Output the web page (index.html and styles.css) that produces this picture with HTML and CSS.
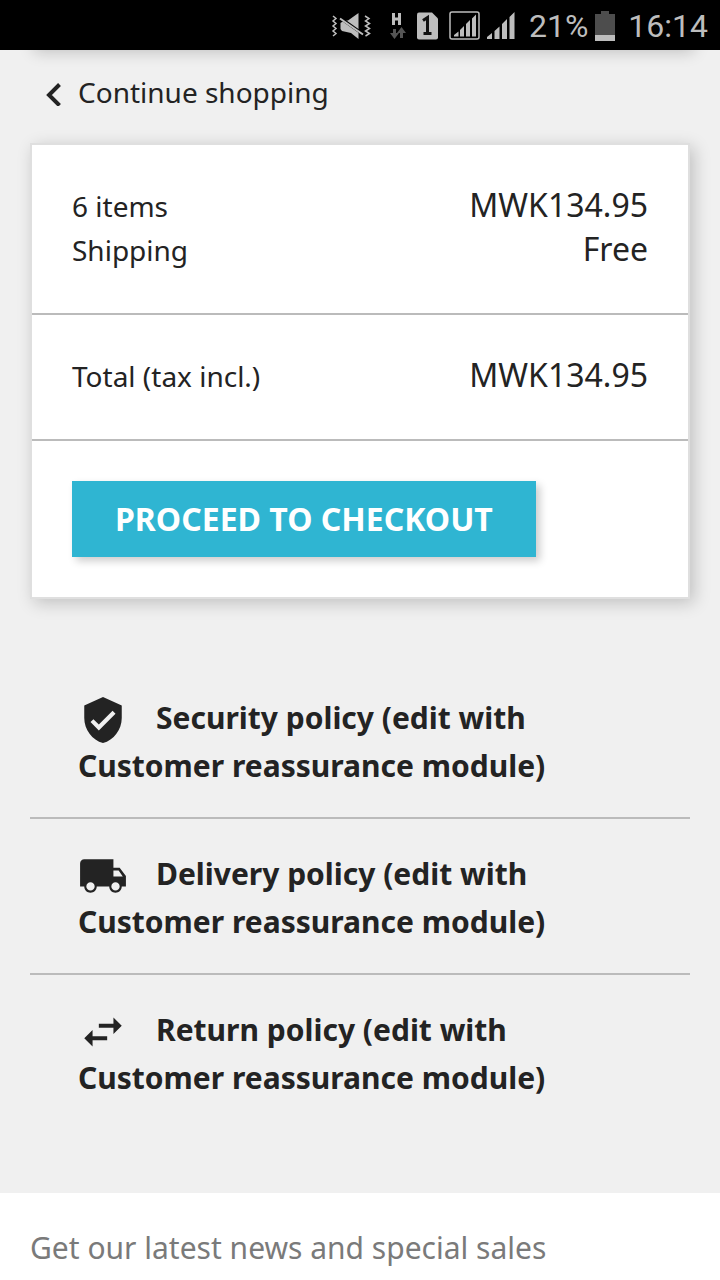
FILE: index.html
```html
<!DOCTYPE html>
<html lang="en">
<head>
<meta charset="utf-8">
<meta name="viewport" content="width=device-width, initial-scale=1">
<title>Shopping cart</title>
<link rel="stylesheet" href="styles.css">
</head>
<body>
<header class="status">
  <svg class="status-mute" width="40" height="28" viewBox="0 0 40 28" aria-hidden="true">
    <path d="M17 8.500L27.500 1v26L20 21l-9-2-1.500-2v-6l3-2z" fill="#bdbdbd"/>
    <path d="M10 6.500l24 17" stroke="#000" stroke-width="3"/>
    <path d="M9 6.500l23 16" stroke="#bdbdbd" stroke-width="2"/>
    <path d="M2 4l3 2.500L2 9l3 2.500L2 14l3 2.500L2 19l3 2.500L2 24M34 4l4 2.500L34.500 9l4 2.500-4 2.500 4 2.500-4 2.500 4 2.500-4 2.500" fill="none" stroke="#bdbdbd" stroke-width="1.500"/>
  </svg>
  <svg class="status-data" width="18" height="28" viewBox="0 0 18 28" aria-hidden="true">
    <path d="M4.500 1v12M10.500 1v12M4.500 7h6" fill="none" stroke="#bdbdbd" stroke-width="3"/>
    <path d="M4 17v4H1l4.500 6 4.500-6H7v-4zM11 26v-5H8l4.500-6 4.500 6h-3v5z" fill="#555"/>
  </svg>
  <svg class="status-sim" width="22" height="28" viewBox="0 0 22 28" aria-hidden="true">
    <path d="M2 .5h13l6 6V25.500q0 2-2 2H2q-2 0-2-2v-23q0-2 2-2z" fill="#bdbdbd"/>
    <path d="M6 8.500l4.500-3v16.500M6.500 21.500h8" fill="none" stroke="#111" stroke-width="3"/>
  </svg>
  <svg class="status-roaming" width="32" height="30" viewBox="0 0 32 30" aria-hidden="true">
    <rect x="1" y="1" width="29" height="27" rx="2" fill="none" stroke="#bdbdbd" stroke-width="1.500"/>
    <path d="M5 25.500v-1.500l4.500-3.500v5zM11 25.500v-6.500l4-4v10.500zM17 25.500V13l4-4v16.500zM23 25.500V7.500l4-4v22z" fill="#bdbdbd"/>
  </svg>
  <svg class="status-signal" width="28" height="28" viewBox="0 0 28 28" aria-hidden="true">
    <path d="M0 27v-2l5-4v6zM7.500 27v-8l5-4.500V27zM15 27V12l5-5v20zM22.500 27V5l5-5v27z" fill="#bdbdbd"/>
  </svg>
  <span class="status-percent">21%</span>
  <svg class="status-battery" width="20" height="30" viewBox="0 0 20 30" aria-hidden="true">
    <path d="M0 3h6V0h8v3h6v27H0z" fill="#4d4d4d"/>
    <path d="M0 24h20v6H0z" fill="#bdbdbd"/>
  </svg>
  <time class="status-time">16:14</time>
</header>

<main class="cart">
  <div class="card-edge"></div>
  <a class="back" href="#">
    <svg width="16" height="24" viewBox="0 0 16 24" aria-hidden="true"><path d="M13.500 2.500L3 13l10.500 10.500" fill="none" stroke="#232323" stroke-width="4"/></svg>
    <span class="back-label">Continue shopping</span>
  </a>

  <section class="card">
    <div class="card-block">
      <div class="row"><span>6 items</span><span class="price">MWK134.95</span></div>
      <div class="row"><span>Shipping</span><span class="price">Free</span></div>
    </div>
    <div class="card-block">
      <div class="row"><span>Total (tax incl.)</span><span class="price">MWK134.95</span></div>
    </div>
    <div class="card-block">
      <button class="checkout" type="button">PROCEED TO CHECKOUT</button>
    </div>
  </section>

  <ul class="policies">
    <li class="policy">
      <svg class="policy-icon" viewBox="0 0 24 24" aria-hidden="true"><path d="M12 1L3 5v6c0 5.550 3.840 10.740 9 12 5.160-1.260 9-6.450 9-12V5l-9-4zm-2 16l-4-4 1.410-1.410L10 14.170l6.590-6.590L18 9l-8 8z"/></svg>Security policy (edit with Customer reassurance module)
    </li>
    <li class="policy">
      <svg class="policy-icon" viewBox="0 0 24 24" aria-hidden="true"><path d="M20 8h-3V4H3c-1.100 0-2 .9-2 2v11h2c0 1.660 1.340 3 3 3s3-1.340 3-3h6c0 1.660 1.340 3 3 3s3-1.340 3-3h2v-5l-3-4zM6 19a2 2 0 0 1 0-4 2 2 0 0 1 0 4zm13.500-9.700l2 2.900H17V9.300h2.500zM18 19a2 2 0 0 1 0-4 2 2 0 0 1 0 4z"/></svg>Delivery policy (edit with Customer reassurance module)
    </li>
    <li class="policy">
      <svg class="policy-icon" viewBox="0 0 24 24" aria-hidden="true"><path d="M6.990 11L3 15l3.990 4v-3H14v-2H6.990v-3zM21 9l-3.990-4v3H10v2h7.010v3L21 9z"/></svg>Return policy (edit with Customer reassurance module)
    </li>
  </ul>
</main>

<footer class="newsletter">
  <p class="newsletter-text">Get our latest news and special sales</p>
</footer>
</body>
</html>
```

FILE: styles.css
```css
* {
  box-sizing: border-box;
}

body {
  margin: 0;
  background: #fff;
  color: #232323;
  font-family: "Noto Sans", sans-serif;
  font-size: 28px;
}

.status {
  position: relative;
  z-index: 1;
  display: flex;
  align-items: center;
  justify-content: flex-end;
  height: 50px;
  padding: 2px 12px 0 0;
  background: #000;
  color: #bdbdbd;
  font-family: Roboto, sans-serif;
  font-size: 32px;
  line-height: 48px;
}

.status-mute {
  margin-right: 18px;
}

.status-data,
.status-sim {
  margin-right: 10px;
}

.status-roaming {
  margin-right: 6px;
}

.status-signal {
  margin-right: 14px;
}

.status-percent {
  margin-right: 7px;
}

.status-battery {
  margin-right: 13px;
}

.cart {
  display: flow-root;
  padding: 0 30px 64px;
  background: #f0f0f0;
}

.card-edge {
  height: 50px;
  margin-top: -50px;
  box-shadow: 4px 2px 16px rgba(0, 0, 0, 0.2);
}

.back {
  display: flex;
  align-items: center;
  gap: 16px;
  padding: 22px 16px 27px;
  color: inherit;
  text-decoration: none;
}

.back-label {
  padding-bottom: 4px;
  line-height: 40px;
}

.card {
  border: 2px solid #dfdfdf;
  background: #fff;
  box-shadow: 4px 4px 16px rgba(0, 0, 0, 0.2);
}

.card-block {
  padding: 40px;
}

.card-block + .card-block {
  border-top: 2px solid #bbb;
}

.row {
  display: flex;
  align-items: baseline;
  justify-content: space-between;
  min-height: 44px;
  line-height: 40px;
}

.price {
  font-size: 32px;
}

.checkout {
  display: block;
  padding: 16px 43px;
  border: 0;
  background: #2fb5d2;
  box-shadow: 4px 4px 8px rgba(0, 0, 0, 0.2);
  color: #fff;
  font: bold 32px/44px "Noto Sans", sans-serif;
}

.policies {
  margin: 69px 0 0;
  padding: 0;
  list-style: none;
}

.policy {
  padding: 26px 100px 27px 48px;
  font-size: 30px;
  font-weight: bold;
  line-height: 48px;
}

.policy + .policy {
  padding-top: 31px;
  border-top: 2px solid #bbb;
}

.policy-icon {
  width: 50px;
  height: 50px;
  margin: -8px 28px -6px 0;
  fill: #232323;
  vertical-align: middle;
}

.newsletter {
  padding: 31px 30px 0;
}

.newsletter-text {
  margin: 0;
  color: #7a7a7a;
  font-size: 30px;
  line-height: 48px;
}
```
